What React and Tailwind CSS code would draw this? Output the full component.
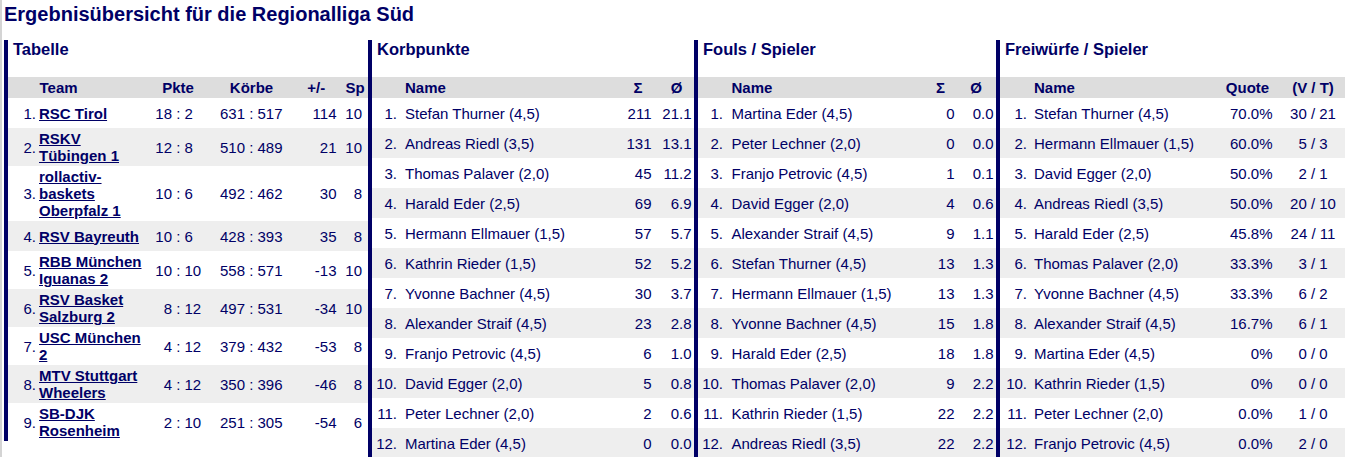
import React from "react";

const tabelle = [
  ["RSC Tirol", "18", "2", "631", "517", "114", "10"],
  ["RSKV Tübingen 1", "12", "8", "510", "489", "21", "10"],
  ["rollactiv-baskets Oberpfalz 1", "10", "6", "492", "462", "30", "8"],
  ["RSV Bayreuth", "10", "6", "428", "393", "35", "8"],
  ["RBB München Iguanas 2", "10", "10", "558", "571", "-13", "10"],
  ["RSV Basket Salzburg 2", "8", "12", "497", "531", "-34", "10"],
  ["USC München 2", "4", "12", "379", "432", "-53", "8"],
  ["MTV Stuttgart Wheelers", "4", "12", "350", "396", "-46", "8"],
  ["SB-DJK Rosenheim", "2", "10", "251", "305", "-54", "6"],
];

const korb = [
  ["Stefan Thurner (4,5)", "211", "21.1"],
  ["Andreas Riedl (3,5)", "131", "13.1"],
  ["Thomas Palaver (2,0)", "45", "11.2"],
  ["Harald Eder (2,5)", "69", "6.9"],
  ["Hermann Ellmauer (1,5)", "57", "5.7"],
  ["Kathrin Rieder (1,5)", "52", "5.2"],
  ["Yvonne Bachner (4,5)", "30", "3.7"],
  ["Alexander Straif (4,5)", "23", "2.8"],
  ["Franjo Petrovic (4,5)", "6", "1.0"],
  ["David Egger (2,0)", "5", "0.8"],
  ["Peter Lechner (2,0)", "2", "0.6"],
  ["Martina Eder (4,5)", "0", "0.0"],
];

const fouls = [
  ["Martina Eder (4,5)", "0", "0.0"],
  ["Peter Lechner (2,0)", "0", "0.0"],
  ["Franjo Petrovic (4,5)", "1", "0.1"],
  ["David Egger (2,0)", "4", "0.6"],
  ["Alexander Straif (4,5)", "9", "1.1"],
  ["Stefan Thurner (4,5)", "13", "1.3"],
  ["Hermann Ellmauer (1,5)", "13", "1.3"],
  ["Yvonne Bachner (4,5)", "15", "1.8"],
  ["Harald Eder (2,5)", "18", "1.8"],
  ["Thomas Palaver (2,0)", "9", "2.2"],
  ["Kathrin Rieder (1,5)", "22", "2.2"],
  ["Andreas Riedl (3,5)", "22", "2.2"],
];

const frei = [
  ["Stefan Thurner (4,5)", "70.0%", "30 / 21"],
  ["Hermann Ellmauer (1,5)", "60.0%", "5 / 3"],
  ["David Egger (2,0)", "50.0%", "2 / 1"],
  ["Andreas Riedl (3,5)", "50.0%", "20 / 10"],
  ["Harald Eder (2,5)", "45.8%", "24 / 11"],
  ["Thomas Palaver (2,0)", "33.3%", "3 / 1"],
  ["Yvonne Bachner (4,5)", "33.3%", "6 / 2"],
  ["Alexander Straif (4,5)", "16.7%", "6 / 1"],
  ["Martina Eder (4,5)", "0%", "0 / 0"],
  ["Kathrin Rieder (1,5)", "0%", "0 / 0"],
  ["Peter Lechner (2,0)", "0.0%", "1 / 0"],
  ["Franjo Petrovic (4,5)", "0.0%", "2 / 0"],
];

function PanelTitle({ children }) {
  return (
    <div className="h-[37px] text-[16.5px] leading-[19px] font-bold pl-[5px] whitespace-nowrap">
      {children}
    </div>
  );
}

function TabellePanel() {
  return (
    <div className="w-[364px] shrink-0 border-l-4 border-[#000066]">
      <PanelTitle>Tabelle</PanelTitle>
      <div className="flex h-[21px] items-center bg-[#dddddd] font-bold whitespace-nowrap">
        <div className="w-[28px]" />
        <div className="w-[113px] pl-[3.5px]">Team</div>
        <div className="w-[58px] text-center">Pkte</div>
        <div className="w-[89px] text-center">Körbe</div>
        <div className="w-[40.5px] text-center">+/-</div>
        <div className="w-[31.5px] pl-[9px] pr-[6px] text-center">Sp</div>
      </div>
      {tabelle.map((r, i) => (
        <div
          key={i}
          className={
            i % 2 === 1
              ? "flex min-h-[30px] items-center py-[2px] bg-[#eeeeee]"
              : "flex min-h-[30px] items-center py-[2px]"
          }
        >
          <div className="w-[28px] text-right">{i + 1}.</div>
          <div className="w-[113px] pl-[3px] pr-[6px]">
            <a href="#" className="font-bold underline">
              {r[0]}
            </a>
          </div>
          <div className="w-[23px] text-right">{r[1]}</div>
          <div className="w-[12.5px] text-center">:</div>
          <div className="w-[22.5px] text-left">{r[2]}</div>
          <div className="w-[38px] text-right">{r[3]}</div>
          <div className="w-[12.5px] text-center">:</div>
          <div className="w-[38.5px] text-left">{r[4]}</div>
          <div className="w-[40.5px] text-right">{r[5]}</div>
          <div className="w-[31.5px] pr-[6px] text-right">{r[6]}</div>
        </div>
      ))}
    </div>
  );
}

function StatPanel({ title, cfg, headers, rows }) {
  return (
    <div className={cfg.panel}>
      <PanelTitle>{title}</PanelTitle>
      <div className={"flex h-[21px] items-center bg-[#dddddd] font-bold whitespace-nowrap " + cfg.pr}>
        <div className={cfg.rank} />
        <div className={"flex-1 " + cfg.name}>Name</div>
        <div className={"text-center " + cfg.c1 + " " + cfg.h1}>{headers[0]}</div>
        <div className={"text-center " + cfg.c2 + " " + cfg.h2}>{headers[1]}</div>
      </div>
      {rows.map((r, i) => (
        <div
          key={i}
          className={
            (i % 2 === 1
              ? "flex h-[30px] items-center whitespace-nowrap bg-[#eeeeee] "
              : "flex h-[30px] items-center whitespace-nowrap ") + cfg.pr
          }
        >
          <div className={"text-right " + cfg.rank}>{i + 1}.</div>
          <div className={"flex-1 " + cfg.name}>{r[0]}</div>
          <div className={"text-right " + cfg.c1}>{r[1]}</div>
          <div className={cfg.c2 + " " + cfg.d2}>{r[2]}</div>
        </div>
      ))}
    </div>
  );
}

const korbCfg = {
  panel: "w-[326px] shrink-0 border-l-4 border-[#000066]",
  rank: "w-[25px]",
  name: "pl-[8px]",
  c1: "w-[40px]",
  h1: "pl-[13px]",
  c2: "w-[40px]",
  h2: "pl-[10px]",
  d2: "text-right",
  pr: "pr-[2.5px]",
};

const foulsCfg = {
  panel: "w-[302px] shrink-0 border-l-4 border-[#000066]",
  rank: "w-[25px]",
  name: "pl-[8.5px]",
  c1: "w-[40px]",
  h1: "pl-[12px]",
  c2: "w-[39px]",
  h2: "pl-[4px]",
  d2: "text-right",
  pr: "pr-[2.5px]",
};

const freiCfg = {
  panel: "flex-1 min-w-0 border-l-4 border-[#000066]",
  rank: "w-[27px]",
  name: "pl-[7px]",
  c1: "w-[60px]",
  h1: "pl-[10px]",
  c2: "w-[70.5px] pl-[10.5px]",
  h2: "",
  d2: "text-center",
  pr: "pr-[2px]",
};

export default function App() {
  return (
    <div className="h-screen overflow-hidden bg-white border-l-2 border-[#d4d4d4] pl-[2px] text-[#000066] text-[15px] leading-[17px] font-['Liberation_Sans',Arial,sans-serif]">
      <h1 className="pt-[3px] text-[20px] leading-[23px] font-bold whitespace-nowrap">
        Ergebnisübersicht für die Regionalliga Süd
      </h1>
      <div className="mt-[14px] flex items-start">
        <TabellePanel />
        <StatPanel title="Korbpunkte" cfg={korbCfg} headers={["Σ", "Ø"]} rows={korb} />
        <StatPanel title="Fouls / Spieler" cfg={foulsCfg} headers={["Σ", "Ø"]} rows={fouls} />
        <StatPanel title="Freiwürfe / Spieler" cfg={freiCfg} headers={["Quote", "(V / T)"]} rows={frei} />
      </div>
    </div>
  );
}
